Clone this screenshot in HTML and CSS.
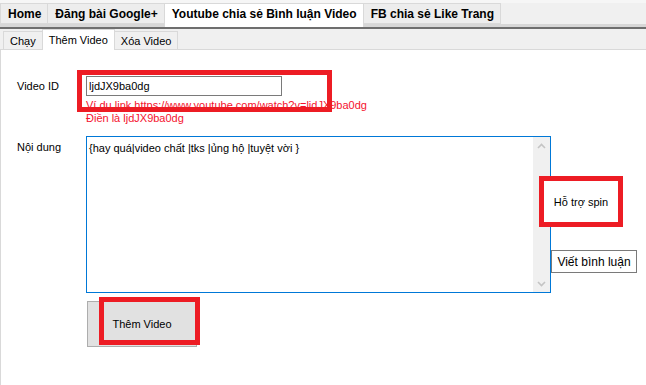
FILE: index.html
```html
<!DOCTYPE html>
<html lang="vi">
<head>
  <meta charset="UTF-8">
  <title>Youtube chia sẻ Bình luận Video</title>
  <link rel="stylesheet" href="styles.css">
</head>
<body>
  <div class="main-tabs">
    <div class="tab">Home</div>
    <div class="tab">Đăng bài Google+</div>
    <div class="tab active">Youtube chia sẻ Bình luận Video</div>
    <div class="tab">FB chia sẻ Like Trang</div>
  </div>
  <div class="main-rule"></div>

  <div class="sub-tabs">
    <div class="sub-tab">Chạy</div>
    <div class="sub-tab active">Thêm Video</div>
    <div class="sub-tab">Xóa Video</div>
  </div>

  <div class="panel">
    <div class="row">
      <div class="field-label">Video ID</div>
      <div class="field">
        <div class="marked">
          <input class="text-input" type="text" value="ljdJX9ba0dg">
          <div class="mark mark-input"></div>
        </div>
        <div class="hint">Ví du link https://www.youtube.com/watch?v=ljdJX9ba0dg</div>
        <div class="hint">Điền là ljdJX9ba0dg</div>
      </div>
    </div>

    <div class="row row-content">
      <div class="field-label label-top">Nội dung</div>
      <div class="editor">
        <div class="editor-text">{hay quá|video chất |tks |ủng hộ |tuyệt vời }</div>
        <div class="scrollbar">
          <svg width="17" height="17" viewBox="0 0 17 17"><polyline points="5,10 8.5,6.5 12,10" fill="none" stroke="#c4c4c4" stroke-width="1.6"/></svg>
          <svg width="17" height="17" viewBox="0 0 17 17"><polyline points="5,7 8.5,10.5 12,7" fill="none" stroke="#c4c4c4" stroke-width="1.6"/></svg>
        </div>
      </div>
      <div class="side">
        <button class="btn-spin">Hỗ trợ spin</button>
        <button class="btn-comment">Viết bình luận</button>
      </div>
    </div>

    <div class="actions">
      <div class="marked">
        <button class="btn-add">Thêm Video</button>
        <div class="mark mark-add"></div>
      </div>
    </div>
  </div>
</body>
</html>
```

FILE: styles.css
```css
body {
    margin: 0;
    font-family: 'Liberation Sans', Arial, sans-serif;
    font-size: 11px;
    color: #000;
    background-color: #fff;
    width: 646px;
    height: 385px;
    overflow: hidden;
}

/* top tab strip */
.main-tabs {
    display: flex;
    align-items: flex-start;
    height: 27px;
    padding-top: 3px;
    box-sizing: border-box;
    background: linear-gradient(#f6f6f6 3px, #f0f0f0 3px);
    box-shadow: inset 0 -3px 0 #d7d7d7;
}

.tab {
    height: 21px;
    line-height: 20px;
    padding: 0 6px 0 7px;
    box-sizing: border-box;
    border: 1px solid #d9d9d9;
    margin-right: -1px;
    background-color: #ededed;
    font-size: 12px;
    font-weight: bold;
    white-space: nowrap;
}

.tab.active {
    height: 24px;
    background-color: #fff;
    border-bottom: none;
    position: relative;
}

.main-rule {
    height: 2px;
    background-color: #6e6e6e;
}

/* second tab strip */
.sub-tabs {
    display: flex;
    align-items: flex-end;
    height: 21px;
    padding-left: 3px;
    box-sizing: border-box;
    background-color: #f0f0f0;
    border-bottom: 1px solid #d9d9d9;
}

.sub-tab {
    height: 18px;
    line-height: 18px;
    padding: 0 6px;
    box-sizing: border-box;
    border: 1px solid #d9d9d9;
    border-bottom: none;
    margin-right: -1px;
    white-space: nowrap;
}

.sub-tab.active {
    height: 21px;
    line-height: 20px;
    margin-bottom: -1px;
    background-color: #fff;
    position: relative;
}

/* form panel */
.panel {
    height: 335px;
    box-sizing: border-box;
    border-left: 1px solid #d9d9d9;
    padding: 26px 0 0 16px;
}

.row {
    display: flex;
    align-items: flex-start;
}

.field-label {
    width: 69px;
    flex: none;
    line-height: 20px;
}

.label-top {
    padding-top: 4px;
    line-height: 14px;
}

.marked {
    position: relative;
    display: inline-block;
}

.text-input {
    display: block;
    width: 196px;
    height: 20px;
    box-sizing: border-box;
    margin: 0;
    padding: 0 2px;
    border: 1px solid #7a7a7a;
    font-family: inherit;
    font-size: 11px;
    color: #000;
    outline: none;
}

.hint {
    color: #f5122e;
    line-height: 13px;
}

.marked + .hint {
    margin-top: 3px;
}

/* red annotation frames */
.mark {
    position: absolute;
    border: 5px solid #ed1c24;
    box-sizing: border-box;
    pointer-events: none;
}

.mark-input {
    left: -9px;
    top: -6px;
    width: 255px;
    height: 42px;
}

.mark-add {
    left: 12px;
    top: -4px;
    width: 101px;
    height: 48px;
}

.row-content {
    margin-top: 11px;
}

.editor {
    display: flex;
    width: 465px;
    height: 157px;
    box-sizing: border-box;
    border: 1px solid #0078d7;
    flex: none;
}

.editor-text {
    flex: 1;
    padding: 4px 2px;
    line-height: 14px;
}

.scrollbar {
    width: 17px;
    background-color: #f0f0f0;
    display: flex;
    flex-direction: column;
    justify-content: space-between;
    padding: 1px 0 0;
}

.scrollbar svg {
    display: block;
}

.side {
    display: flex;
    flex-direction: column;
    align-items: flex-start;
}

button {
    font-family: inherit;
    color: #000;
    margin: 0;
    padding: 0;
    cursor: pointer;
}

.btn-spin {
    margin: 40px 0 0 -12px;
    width: 84px;
    height: 51px;
    border: 5px solid #ed1c24;
    background-color: #fff;
    font-size: 11px;
    position: relative;
}

.btn-comment {
    margin-top: 23px;
    width: 86px;
    height: 23px;
    border: 1px solid #7a7a7a;
    background-color: #fff;
    font-size: 12px;
}

.actions {
    margin: 8px 0 0 70px;
}

.btn-add {
    display: block;
    width: 110px;
    height: 46px;
    border: 1px solid #adadad;
    background-color: #e1e1e1;
    font-size: 11px;
}
```
